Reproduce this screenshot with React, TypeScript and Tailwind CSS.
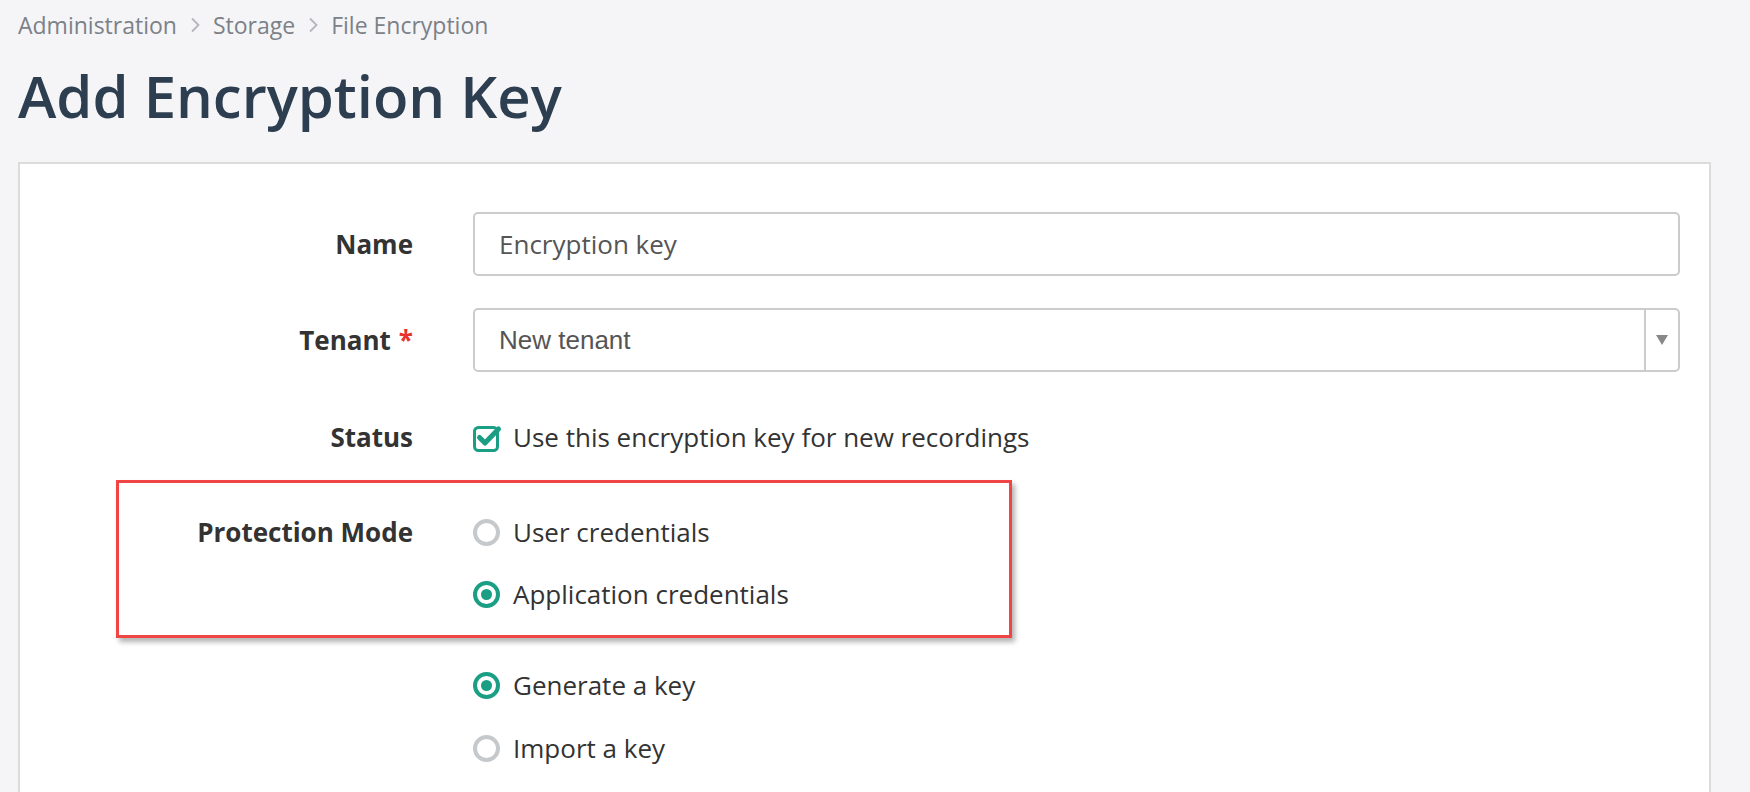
import React from 'react';

const font = { fontFamily: '"Open Sans", "Noto Sans", sans-serif' };

const Chevron: React.FC = () => (
  <svg width="12" height="18" viewBox="0 0 12 18" className="mx-[12px] text-[#b3b6ba]">
    <path d="M3 2.5l6.5 6.5L3 15.5" fill="none" stroke="currentColor" strokeWidth="1.8" />
  </svg>
);

const Radio: React.FC<{ checked?: boolean; label: string }> = ({ checked, label }) => (
  <label className="flex h-10 items-center gap-[13px] text-[26px] text-[#333]">
    {checked ? (
      <span className="flex h-[27px] w-[27px] items-center justify-center rounded-full border-[4px] border-[#1a9e84] bg-white">
        <span className="h-[11px] w-[11px] rounded-full bg-[#1a9e84]" />
      </span>
    ) : (
      <span className="h-[27px] w-[27px] rounded-full border-[4px] border-[#c6c9cc] bg-white" />
    )}
    <span>{label}</span>
  </label>
);

const CheckIcon: React.FC = () => (
  <svg width="32" height="30" viewBox="0 0 32 30">
    <rect x="1.5" y="5.5" width="23" height="23" rx="4" fill="white" stroke="#1a9e84" strokeWidth="3" />
    <path d="M6.5 15.5l5.5 5.5L25.5 7" fill="none" stroke="#1a9e84" strokeWidth="5" strokeLinecap="round" strokeLinejoin="round" />
  </svg>
);

export default function App() {
  return (
    <div className="min-h-screen bg-[#f5f5f7] pl-[18px] pr-[39px] pt-[8px]" style={font}>
      {/* breadcrumb */}
      <nav className="flex h-[34px] items-center text-[23px] text-[#7b8187]">
        <span>Administration</span>
        <Chevron />
        <span>Storage</span>
        <Chevron />
        <span>File Encryption</span>
      </nav>

      <h1 className="mt-[18px] text-[58px] font-semibold leading-[72px] text-[#2d3e50]">Add Encryption Key</h1>

      <div className="relative mt-[30px] h-[700px] border-2 border-[#dcdcdc] bg-white pr-[29px] pt-[48px]">
        <div className="grid grid-cols-[393px_1fr] gap-x-[60px]">
          {/* Name */}
          <div className="flex h-[64px] items-center justify-end text-[26px] font-bold text-[#333]">Name</div>
          <div className="flex h-[64px] items-center rounded-[5px] border-2 border-[#ccc] px-[24px] text-[26px] text-[#555]">
            Encryption key
          </div>

          {/* Tenant */}
          <div className="mt-[32px] flex h-[64px] items-center justify-end gap-[8px] text-[26px] font-bold text-[#333]">
            Tenant <span className="text-[#e8322e]">*</span>
          </div>
          <div className="mt-[32px] flex h-[64px] items-stretch rounded-[5px] border-2 border-[#ccc] text-[26px] text-[#555]">
            <div className="flex flex-1 items-center px-[24px]" style={{ fontFamily: '"Liberation Sans", Arial, sans-serif' }}>
              New tenant
            </div>
            <div className="flex w-[34px] items-center justify-center border-l-2 border-[#ccc]">
              <svg width="12" height="10" viewBox="0 0 12 10">
                <path d="M0 0h12L6 10z" fill="#888" />
              </svg>
            </div>
          </div>

          {/* Status */}
          <div className="mt-[45px] flex h-10 items-center justify-end text-[26px] font-bold text-[#333]">Status</div>
          <div className="mt-[45px] flex h-10 items-center gap-[8px] text-[26px] text-[#333]">
            <CheckIcon />
            <span>Use this encryption key for new recordings</span>
          </div>

          {/* Protection mode */}
          <div className="mt-[55px] flex h-10 items-center justify-end text-[26px] font-bold text-[#333]">Protection Mode</div>
          <div className="mt-[55px] flex flex-col gap-[22px]">
            <Radio label="User credentials" />
            <Radio checked label="Application credentials" />
          </div>

          {/* Key source */}
          <div />
          <div className="mt-[51px] flex flex-col gap-[23px]">
            <Radio checked label="Generate a key" />
            <Radio label="Import a key" />
          </div>
        </div>

        {/* annotation highlight */}
        <div className="pointer-events-none absolute left-[96px] top-[316px] h-[158px] w-[896px] border-[3px] border-[#f04445] shadow-[3px_4px_5px_rgba(0,0,0,0.3)]" />
      </div>
    </div>
  );
}
